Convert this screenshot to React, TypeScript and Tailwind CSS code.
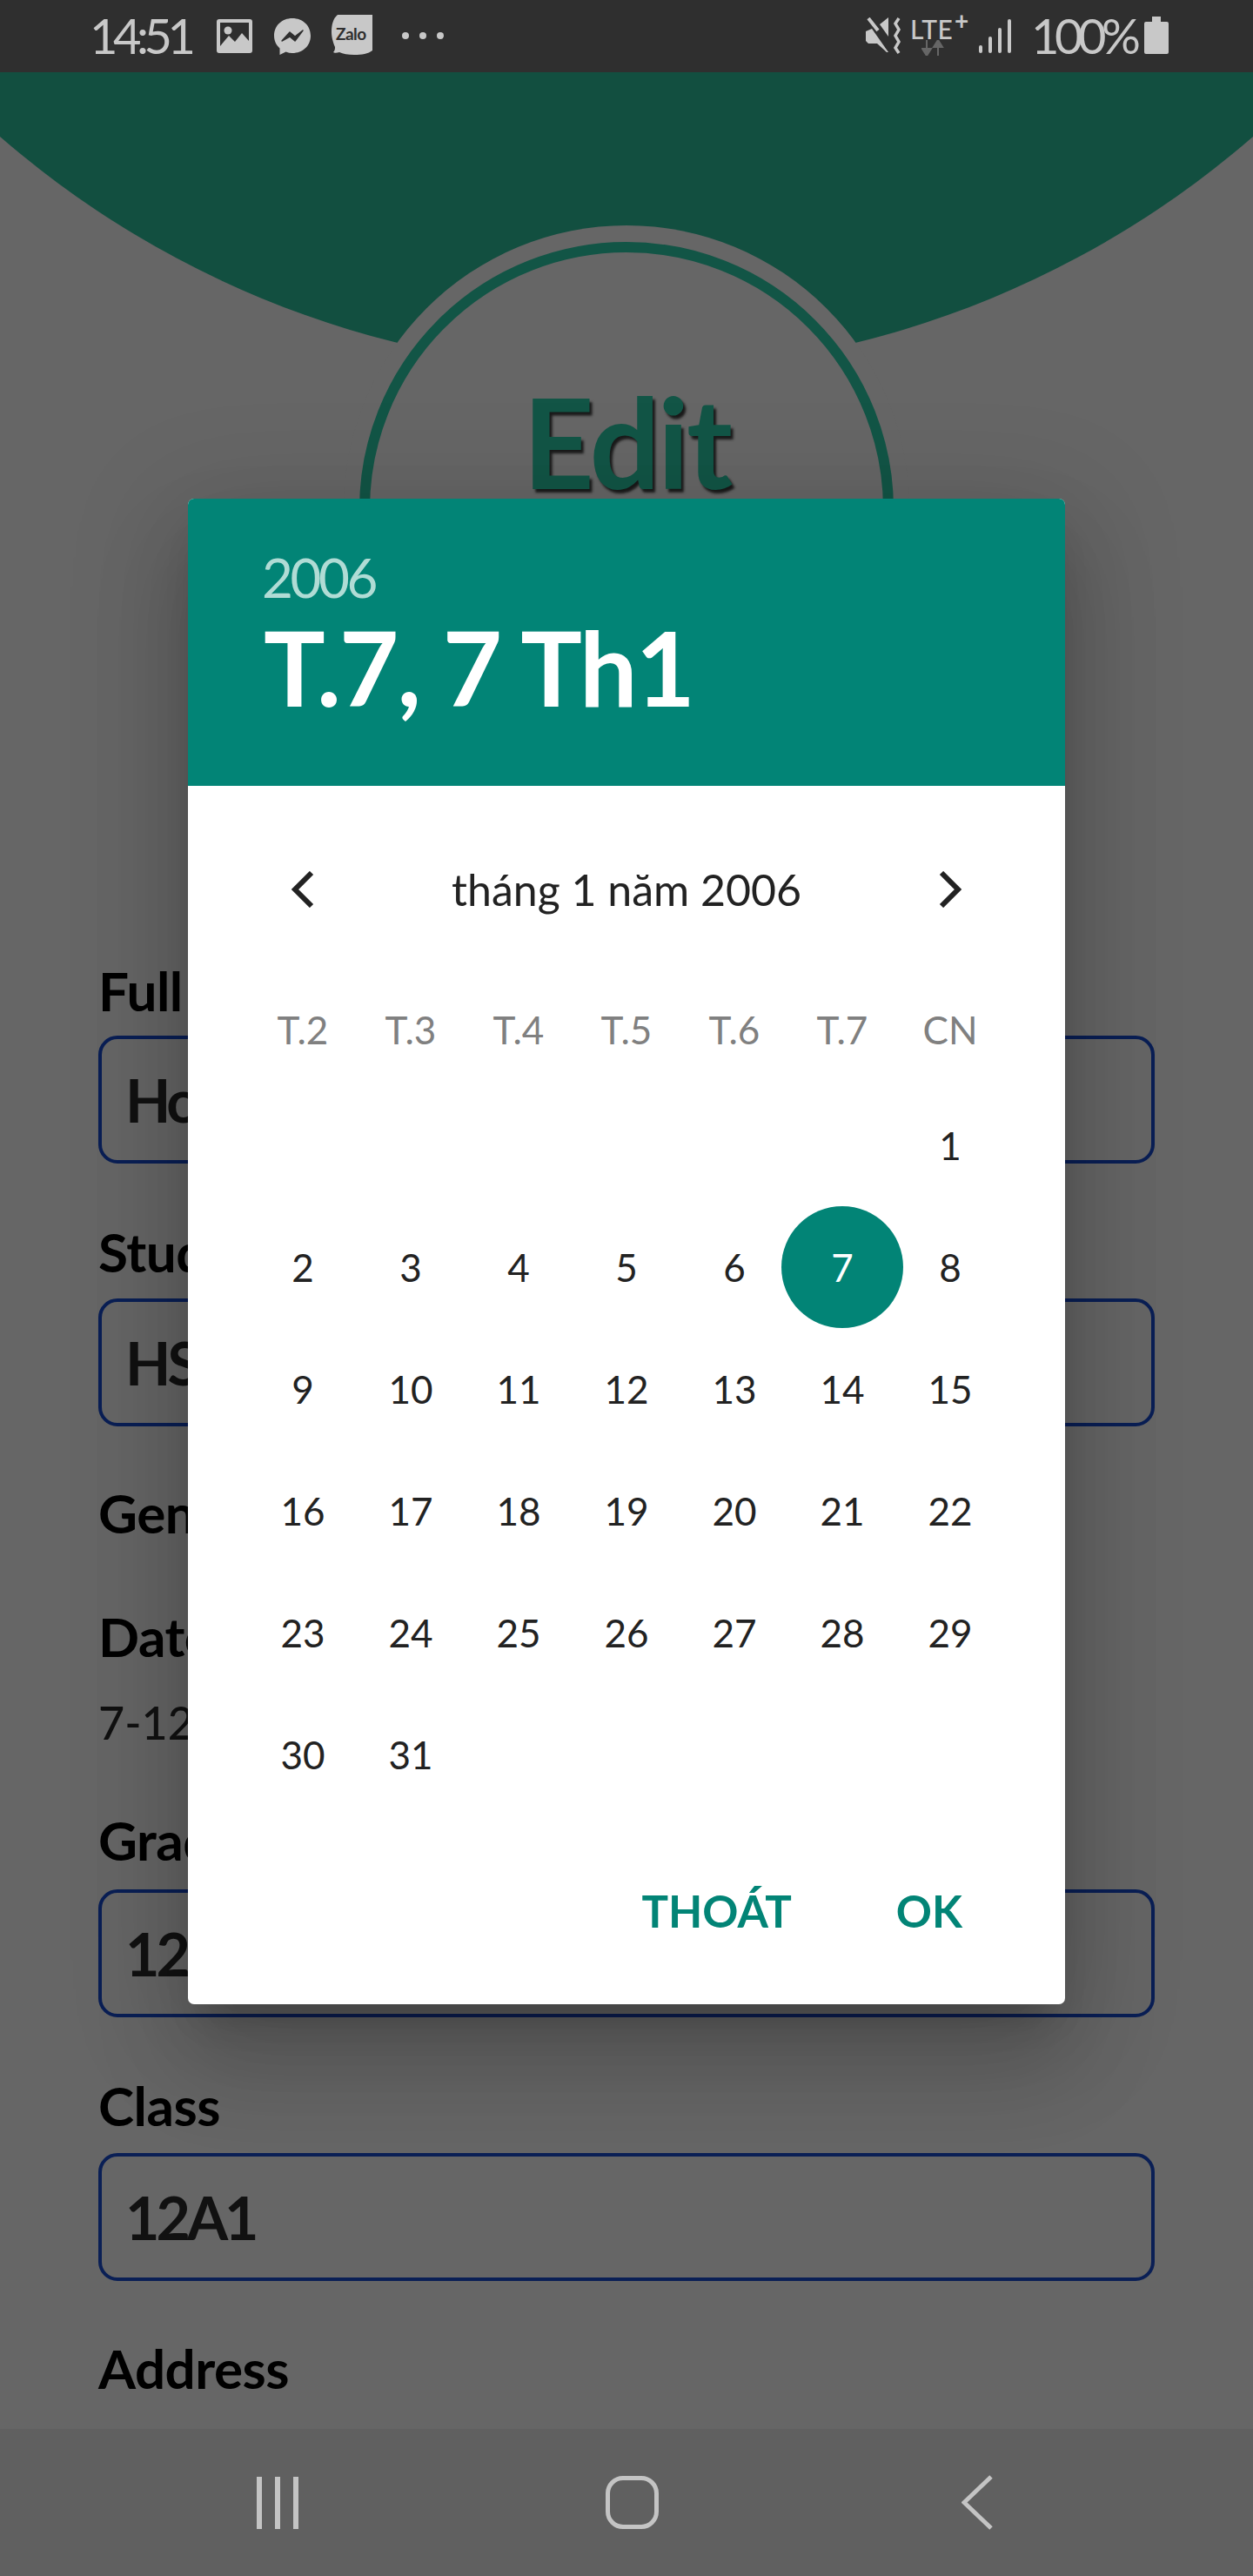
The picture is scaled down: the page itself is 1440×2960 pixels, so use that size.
const weekDays = ['T.2', 'T.3', 'T.4', 'T.5', 'T.6', 'T.7', 'CN'];
// January 2006 starts on a Sunday, so six blanks before the 1st
const days: (number | null)[] = [null, null, null, null, null, null, ...Array.from({ length: 31 }, (_, i) => i + 1)];

function Field({ label, value, className }: { label: string; value: string; className: string }) {
  return (
    <div className={className}>
      <div className="text-[62px] leading-[72px] font-bold text-black tracking-[-0.5px]">{label}</div>
      <div className="h-[147px] border-[4px] border-[#0a1f55] rounded-[22px] flex items-center pl-[27px] text-[68px] text-[#111] tracking-[-4px] font-bold">
        {value}
      </div>
    </div>
  );
}

function StatusBar() {
  return (
    <div className="h-[83px] bg-[#2f2f2f] flex items-start text-[#c8c8c8] shrink-0">
      <div className="ml-[103px] w-[113px] mt-[9px] text-[56px] leading-[64px] tracking-[-5.5px] whitespace-nowrap">14:51</div>
      <svg className="ml-[33px] mt-[22px]" width="41" height="39" viewBox="0 0 41 39">
        <rect width="41" height="39" rx="3" fill="#c8c8c8" />
        <rect x="4" y="4" width="33" height="31" fill="#2f2f2f" />
        <circle cx="13" cy="13" r="4.5" fill="#c8c8c8" />
        <path d="M4 31 L14 19 L21 26 L29 16 L37 25 V35 H4 Z" fill="#c8c8c8" />
      </svg>
      <svg className="ml-[25px] mt-[21px]" width="42" height="42" viewBox="0 0 42 42">
        <path d="M21 0 C9 0 0 8.500 0 20 C0 26 2.500 31 6.500 34.500 V42 L13.500 38.500 C16 39.500 18.500 40 21 40 C33 40 42 31.500 42 20 C42 8.500 33 0 21 0 Z" fill="#c8c8c8" />
        <path d="M9 26 L18 16 L24 21 L33 14 L24 26 L18 21 Z" fill="#2f2f2f" stroke="#2f2f2f" strokeWidth="1.500" strokeLinejoin="round" />
      </svg>
      <svg className="ml-[24px] mt-[17px]" width="47" height="46" viewBox="0 0 47 46">
        <path d="M7 0 H47 V41 C42 45 35 46 26 46 C19 46 13 45 9 43 C6 44 3 44 2 43 C4 41 4 39 4 37 C1 30 0 24 0 20 C0 11 2 4 7 0 Z" fill="#c8c8c8" />
        <text x="5" y="29" fontSize="19" fontWeight="700" fill="#2f2f2f" letterSpacing="-0.500">Zalo</text>
      </svg>
      <div className="ml-[34px] mt-[37px] flex gap-[12px]">
        <div className="w-[8px] h-[8px] rounded-full bg-[#c8c8c8]" />
        <div className="w-[8px] h-[8px] rounded-full bg-[#c8c8c8]" />
        <div className="w-[8px] h-[8px] rounded-full bg-[#c8c8c8]" />
      </div>

      <svg className="ml-[485px] mt-[20px]" width="42" height="42" viewBox="0 0 42 42">
        <path d="M0 16 L7 13 L26 40 H24 L13 30 H3 L0 27 Z" fill="#c8c8c8" />
        <path d="M16 8 L26 0 V22 Z" fill="#c8c8c8" />
        <path d="M3 1 L14 15" stroke="#c8c8c8" strokeWidth="4" fill="none" />
        <path d="M38 1 L34 7 L38 14 L34 21 L38 28 L34 35 L38 41" stroke="#c8c8c8" strokeWidth="3.500" fill="none" />
      </svg>
      <div className="ml-[9px] mt-[16px] w-[69px] relative h-[50px]">
        <div className="text-[30px] leading-[33px] mt-[1px] tracking-[0.5px] font-medium">LTE</div>
        <div className="absolute left-[51px] top-[-8px] text-[28px] leading-[30px] font-bold">+</div>
        <svg className="absolute left-[13px] top-[30px]" width="26" height="18" viewBox="0 0 26 18">
          <path d="M6 0 V10 M1 10 H11 L6 18 Z M19 18 V8 M14 8 H24 L19 0 Z" stroke="#666" strokeWidth="2" fill="#666" />
        </svg>
      </div>
      <svg className="ml-[10px] mt-[22px]" width="37" height="40" viewBox="0 0 37 40">
        <rect x="0" y="30" width="4" height="9" rx="2" fill="#c8c8c8" />
        <rect x="11" y="20" width="4" height="19" rx="2" fill="#c8c8c8" />
        <rect x="22" y="10" width="4" height="29" rx="2" fill="#c8c8c8" />
        <rect x="33" y="0" width="4" height="39" rx="2" fill="#c8c8c8" />
      </svg>
      <div className="ml-[23px] w-[118px] mt-[9px] text-[56px] leading-[64px] tracking-[-5.5px] whitespace-nowrap">100%</div>
      <svg className="ml-[12px] mt-[19px]" width="28" height="43" viewBox="0 0 28 43">
        <path d="M9 0 H19 V6 H26 Q28 6 28 8 V41 Q28 43 26 43 H2 Q0 43 0 41 V8 Q0 6 2 6 H9 Z" fill="#c8c8c8" />
      </svg>
    </div>
  );
}

function NavBar() {
  return (
    <div className="h-[169px] bg-[#606060] flex items-center shrink-0">
      <div className="ml-[295px] flex gap-[15px]">
        <div className="w-[6px] h-[60px] bg-[#c4c4c4]" />
        <div className="w-[6px] h-[60px] bg-[#c4c4c4]" />
        <div className="w-[6px] h-[60px] bg-[#c4c4c4]" />
      </div>
      <div className="ml-[353px] w-[61px] h-[61px] border-[5px] border-[#c4c4c4] rounded-[20px]" />
      <svg className="ml-[348px]" width="37" height="63" viewBox="0 0 37 63">
        <path d="M34 2 L3 31.500 L34 61" stroke="#c4c4c4" strokeWidth="5" fill="none" />
      </svg>
    </div>
  );
}

function DatePicker() {
  return (
    <div className="absolute left-[216px] top-[573px] w-[1008px] h-[1730px] bg-white rounded-[7px] shadow-[0_66px_106px_8px_rgba(0,0,0,0.14),0_25px_128px_22px_rgba(0,0,0,0.12),0_30px_42px_-20px_rgba(0,0,0,0.2)]">
      <div className="h-[330px] bg-[#028476] rounded-t-[7px] pl-[85px] pt-[55px]">
        <div className="text-[62px] leading-[70px] text-[#b0dcd5] tracking-[-3.5px]">2006</div>
        <div className="text-[118px] leading-[130px] font-bold text-white mt-[4px] ml-[2px] tracking-[-2px] whitespace-nowrap">T.7, 7 Th1</div>
      </div>

      <div className="flex items-center justify-between h-[60px] mt-[89px] px-[118px]">
        <svg width="27" height="42" viewBox="0 0 27 42">
          <path d="M24 2 L5 21 L24 40" stroke="#222" strokeWidth="6" fill="none" />
        </svg>
        <div className="text-[50px] leading-[60px] text-[#222]">tháng 1 năm 2006</div>
        <svg width="27" height="42" viewBox="0 0 27 42">
          <path d="M3 2 L22 21 L3 40" stroke="#222" strokeWidth="6" fill="none" />
        </svg>
      </div>

      <div className="grid grid-cols-7 w-[868px] mx-auto mt-[101px]">
        {weekDays.map((d) => (
          <div key={d} className="h-[60px] flex items-center justify-center text-[44px] text-[#808080]">
            {d}
          </div>
        ))}
      </div>

      <div className="grid grid-cols-7 w-[868px] mx-auto mt-[33px]">
        {days.map((d, i) => (
          <div key={i} className="h-[140px] flex items-center justify-center text-[44px]">
            {d === 7 ? (
              <div className="w-[140px] h-[140px] rounded-full bg-[#028476] text-white flex items-center justify-center shrink-0">7</div>
            ) : (
              <span className="text-[#222]">{d}</span>
            )}
          </div>
        ))}
      </div>

      <div className="flex justify-end gap-[120px] pr-[118px] mt-[80px] text-[51px] leading-[60px] font-bold text-[#028476]">
        <div>THOÁT</div>
        <div>OK</div>
      </div>
    </div>
  );
}

export default function App() {
  return (
    <div className="relative w-[1440px] h-[2960px] overflow-hidden flex flex-col bg-[#666] font-['Lato','Noto_Sans',sans-serif]">
      <StatusBar />

      <div className="relative flex-1 overflow-hidden">
        <div className="absolute left-[-378px] top-[-1853px] w-[2196px] h-[2196px] rounded-full bg-[#124f40]" />
        <div className="absolute left-[395px] top-[176px] w-[650px] h-[650px] rounded-full bg-[#666]" />
        <div className="absolute left-[413px] top-[195px] w-[614px] h-[614px] rounded-full border-[12px] border-[#125546]" />

        <div className="relative pt-[354px] text-center text-[143px] leading-[140px] font-bold text-[#125546] tracking-[-3px] [text-shadow:3px_4px_3px_rgba(0,0,0,0.75)]">
          Edit
        </div>

        <div className="relative px-[113px]">
          <Field className="mt-[525px] flex flex-col gap-[16px]" label="Full name" value="Hoàng" />
          <Field className="mt-[65px] flex flex-col gap-[18px]" label="Student ID" value="HS" />
          <div className="mt-[63px] text-[62px] leading-[72px] font-bold text-black tracking-[-0.5px]">Gender</div>
          <div className="mt-[70px] text-[62px] leading-[72px] font-bold text-black tracking-[-0.5px]">Date of birth</div>
          <div className="mt-[33px] text-[52px] leading-[60px] font-medium text-[#111]">7-12-2006</div>
          <Field className="mt-[69px] flex flex-col gap-[21px]" label="Grade" value="12" />
          <Field className="mt-[65px] flex flex-col gap-[19px]" label="Class" value="12A1" />
          <div className="mt-[64px] text-[62px] leading-[72px] font-bold text-black tracking-[-0.5px]">Address</div>
        </div>
      </div>

      <NavBar />
      <DatePicker />
    </div>
  );
}
